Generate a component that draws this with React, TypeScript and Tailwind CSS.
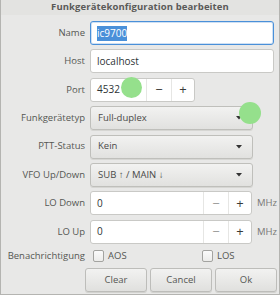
import React from "react"

const font = { fontFamily: "'Open Sans', 'Noto Sans', sans-serif" }

function Label({ children }: { children: React.ReactNode }) {
  return <div className="w-[89px] shrink-0 pr-[5px] text-right text-[9.5px] text-[#555753]">{children}</div>
}

function Row({ label, children }: { label: string; children: React.ReactNode }) {
  return (
    <div className="flex h-[24px] items-center">
      <Label>{label}</Label>
      {children}
    </div>
  )
}

function Combo({ value, w }: { value: string; w: string }) {
  return (
    <div className={`flex h-[24px] ${w} items-center justify-between rounded-[3px] border border-[#bfbfbb] bg-gradient-to-b from-[#f2f2f1] to-[#e1e1df] pl-[7px] pr-[10px] text-[9.5px] text-[#4a4a48] shadow-[0_1px_0_#d6d6d3]`}>
      <span>{value}</span>
      <svg width="6" height="4" viewBox="0 0 6 4"><path d="M0 0h6L3 3.5z" fill="#333" /></svg>
    </div>
  )
}

function Spin({ value, w, minusDim }: { value: string; w: string; minusDim?: boolean }) {
  return (
    <div className={`flex h-[24px] ${w} rounded-[3px] border border-[#c9c9c6] bg-white text-[10px] text-[#2e3436]`}>
      <div className="flex flex-1 items-center pl-[6px]">{value}</div>
      <div className={`flex w-[25px] items-center justify-center border-l border-[#e6e6e4] text-[13px] ${minusDim ? "text-[#9a9a98]" : "text-[#3a3a38]"}`}>−</div>
      <div className="flex w-[23px] items-center justify-center border-l border-[#e6e6e4] text-[13px] text-[#3a3a38]">+</div>
    </div>
  )
}

function Check({ label }: { label: string }) {
  return (
    <div className="flex items-center gap-[4px]">
      <div className="h-[12px] w-[11px] rounded-[2px] border border-[#a3a3a0] bg-gradient-to-b from-[#fbfbfb] to-[#ececea]" />
      <span className="text-[9.5px] text-[#555753]">{label}</span>
    </div>
  )
}

function Btn({ children }: { children: React.ReactNode }) {
  return (
    <div className="flex h-[24px] w-[62px] items-center justify-center rounded-[3px] border border-[#bdbdba] bg-gradient-to-b from-[#f2f2f1] to-[#e0e0de] text-[9.5px] text-[#555753] shadow-[0_1px_0_#d2d2cf]">
      {children}
    </div>
  )
}

export default function App() {
  return (
    <div style={font} className="relative h-[295px] w-[280px] overflow-hidden border-x border-b border-[#b4b4b1] bg-[#e8e8e7]">
      <div className="flex h-[15px] items-center justify-center bg-[#e3e3e1] text-[9.5px] font-bold tracking-[0.1px] text-[#5a5a58]">
        Funkgerätekonfiguration bearbeiten
      </div>

      <div className="mt-[6px] flex flex-col gap-[4.4px]">
        <Row label="Name">
          <div className="flex h-[24px] w-[184px] items-center rounded-[3px] border border-[#4a90d9] bg-white pl-[6px] text-[10px] shadow-[inset_0_0_0_1px_#cfe0f3]">
            <span className="bg-[#4a90d9] text-white">ic9700</span>
          </div>
        </Row>
        <Row label="Host">
          <div className="flex h-[24px] w-[184px] items-center rounded-[3px] border border-[#c9c9c6] bg-white pl-[6px] text-[10px] text-[#2e3436]">
            localhost
          </div>
        </Row>
        <Row label="Port">
          <Spin value="4532" w="w-[105px]" />
        </Row>
        <Row label="Funkgerätetyp">
          <Combo value="Full-duplex" w="w-[163px]" />
        </Row>
        <Row label="PTT-Status">
          <Combo value="Kein" w="w-[163px]" />
        </Row>
        <Row label="VFO Up/Down">
          <Combo value="SUB ↑ / MAIN ↓" w="w-[163px]" />
        </Row>
        <Row label="LO Down">
          <Spin value="0" w="w-[162px]" minusDim />
          <span className="ml-[5px] text-[9.5px] text-[#777775]">MHz</span>
        </Row>
        <Row label="LO Up">
          <Spin value="0" w="w-[162px]" minusDim />
          <span className="ml-[5px] text-[9.5px] text-[#777775]">MHz</span>
        </Row>
      </div>

      <div className="mt-[4px] flex h-[16px] items-center">
        <div className="w-[92px] shrink-0 pr-[8px] text-right text-[9.5px] text-[#555753]">Benachrichtigung</div>
        <div className="w-[109px]">
          <Check label="AOS" />
        </div>
        <Check label="LOS" />
      </div>

      <div className="mt-[4px] flex gap-[3px] pl-[84px]">
        <Btn>Clear</Btn>
        <Btn>Cancel</Btn>
        <Btn>Ok</Btn>
      </div>

      <div className="absolute left-[120px] top-[77px] h-[21px] w-[21px] rounded-full bg-[#95e08c]" />
      <div className="absolute left-[238px] top-[102px] h-[22px] w-[22px] rounded-full bg-[#95e08c]" />
    </div>
  )
}
